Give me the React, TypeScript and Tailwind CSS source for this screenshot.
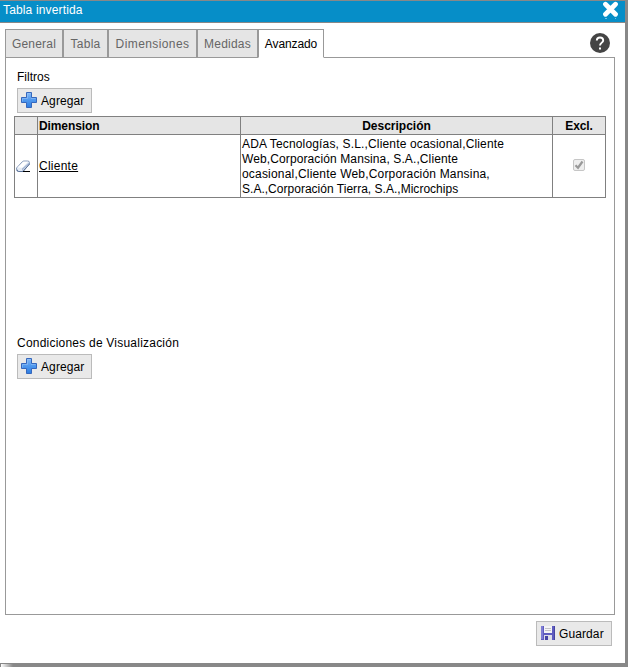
import type { ReactNode } from 'react'

const tabs = [
  { label: 'General', className: 'w-[58px]', spacing: 'tracking-[0.2px]' },
  { label: 'Tabla', className: 'w-[45px]', spacing: 'tracking-[0.3px]' },
  { label: 'Dimensiones', className: 'w-[89px]', spacing: 'tracking-[0.4px]' },
  { label: 'Medidas', className: 'w-[61px]', spacing: 'tracking-[0.2px]' },
  { label: 'Avanzado', className: 'w-[66px]', spacing: 'tracking-[-0.1px]', active: true },
]

const descripcion = [
  { text: 'ADA Tecnologías, S.L.,Cliente ocasional,Cliente', spacing: 'tracking-[0.16px]' },
  { text: 'Web,Corporación Mansina, S.A.,Cliente', spacing: 'tracking-[0.11px]' },
  { text: 'ocasional,Cliente Web,Corporación Mansina,', spacing: 'tracking-[0.19px]' },
  { text: 'S.A.,Corporación Tierra, S.A.,Microchips', spacing: 'tracking-[0.02px]' },
]

function PlusIcon() {
  return (
    <svg className="mb-px" width="16" height="16" viewBox="0 0 16 16">
      <defs>
        <linearGradient id="plus" x1="0" y1="0" x2="0" y2="1">
          <stop offset="0" stopColor="#86b9f4" />
          <stop offset="0.5" stopColor="#4f98ee" />
          <stop offset="1" stopColor="#2e7de0" />
        </linearGradient>
      </defs>
      <path d="M5.5 .5h5v5h5v5h-5v5h-5v-5h-5v-5h5z" fill="url(#plus)" stroke="#3567bd" strokeLinejoin="round" />
      <path d="M6.5 6.5v-5h3M1.5 9.5v-3h5M10 6.5h4.5" fill="none" stroke="#9cc8f8" strokeOpacity="0.5" />
    </svg>
  )
}

function SaveIcon() {
  return (
    <svg className="mb-px" width="14" height="14" viewBox="0 0 14 14">
      <path d="M0 0h14v13l-1 1H0z" fill="#5f5cc0" />
      <path d="M0 0h2v13H0z" fill="#7f7dd4" />
      <path d="M13 0h1v14h-1z" fill="#4644a0" />
      <path d="M3 0h8v7H3z" fill="#f4f4f6" />
      <path d="M4 2h6v1H4zM4 4h6v1H4z" fill="#c3c3c8" />
      <path d="M3 9h8v5H3z" fill="#dedee8" />
      <path d="M4 10h3v4H4z" fill="#4543a5" />
    </svg>
  )
}

function EraserIcon() {
  return (
    <svg width="14" height="13" viewBox="0 0 14 13">
      <path d="M.5 8 6.500 1.500Q7 1 8 1h3.500q2 0 2 1.500V4L7 11.500H2.500Q.5 11.500.5 9.500z" fill="#e4ebf5" stroke="#8a9dbb" />
      <path d="M1.500 7.500 7.500 1.800H12L6.500 7.800z" fill="#fff" />
      <path d="M6 8.500v2.500L13 4V2.500z" fill="#a9bad5" />
      <path d="M1 9.500q.3 2 1.800 2H7L13.500 4" fill="none" stroke="#5c7399" />
      <path d="M7 11h7v1H7z" fill="#000" />
    </svg>
  )
}

function Button({ icon, className, children }: { icon: ReactNode; className: string; children: ReactNode }) {
  return (
    <button type="button" className={`flex h-[25px] items-center border border-[#bbb] bg-[#e9e9e9] ${className}`}>
      {icon}
      <span className="pt-px tracking-[0.1px]">{children}</span>
    </button>
  )
}

export default function App() {
  return (
    <div className="flex h-[667px] w-[628px] flex-col overflow-hidden border-t border-r-[3px] border-b-4 border-[#888] bg-white font-['Liberation_Sans',Arial,sans-serif] text-[12px] leading-[15px] text-black">
      <header className="relative flex h-[22px] shrink-0 justify-between border-b border-[#888] bg-[#068ec8] pl-[3px] text-white">
        <h1 className="pt-[2px] tracking-[0.15px]">Tabla invertida</h1>
        <svg className="mr-[6px]" width="17" height="18" viewBox="0 0 17 18">
          <path d="m3.500 3.300 10 9.900m0-9.900-10 9.900" stroke="#fff" strokeWidth="4.800" strokeLinecap="round" />
          <path d="M3 17.500h2M13 17.500h1" stroke="#6fc0e2" />
        </svg>
      </header>

      <div className="ml-[5px] flex h-[34px] w-[610px] shrink-0 items-start justify-between pt-[6px]">
        <nav className="relative z-10 flex">
          {tabs.map((tab) => (
            <a
              key={tab.label}
              className={`flex h-[29px] items-center justify-center whitespace-nowrap border border-[#999] pt-[2px] ${tab.className} ${tab.spacing} ${
                tab.active ? 'border-b-white bg-white' : 'bg-[#e5e5e5] text-[#666]'
              }`}
            >
              {tab.label}
            </a>
          ))}
        </nav>
        <svg className="mt-[4px] mr-[5px]" width="20" height="20" viewBox="0 0 20 20">
          <circle cx="10" cy="10" r="10" fill="#444" />
          <path d="M6.800 7.600Q6.800 4.500 10 4.500t3.200 2.900c0 2.100-3.200 2.500-3.200 5.100" fill="none" stroke="#fff" strokeWidth="1.900" />
          <path d="M9 14.500h2v2H9z" fill="#fff" />
        </svg>
      </div>

      <main className="ml-[5px] flex h-[558px] w-[610px] shrink-0 flex-col border border-[#999]">
        <section className="h-[266px] pt-[12px]">
          <h2 className="ml-[11px]">Filtros</h2>
          <Button icon={<PlusIcon />} className="mt-[3px] ml-[11px] w-[75px] gap-1 pl-[3px]">Agregar</Button>
          <table className="mt-[3px] ml-[8px] w-[592px] table-fixed border-collapse border border-[#808080]">
            <colgroup>
              <col className="w-[23px]" />
              <col className="w-[203px]" />
              <col className="w-[312px]" />
              <col className="w-[53px]" />
            </colgroup>
            <thead>
              <tr className="h-[18px] bg-[#e5e5e5] tracking-[-0.1px]">
                <th className="border border-[#808080] p-0" />
                <th className="border border-[#808080] p-0 pt-px pl-[1px] text-left">Dimension</th>
                <th className="border border-[#808080] p-0 pt-px tracking-normal">Descripción</th>
                <th className="border border-[#808080] p-0 pt-px">Excl.</th>
              </tr>
            </thead>
            <tbody>
              <tr className="h-[63px]">
                <td className="border border-[#808080] p-0 pl-[1px]">
                  <EraserIcon />
                </td>
                <td className="border border-[#808080] p-0 pl-[1px]">
                  <a className="tracking-[0.25px] underline">Cliente</a>
                </td>
                <td className="border border-[#808080] p-0 pt-[2px] pl-[1px] whitespace-nowrap">
                  {descripcion.map((line) => (
                    <div key={line.text} className={line.spacing}>{line.text}</div>
                  ))}
                </td>
                <td className="border border-[#808080] p-0">
                  <div className="mx-auto -mt-[2px] flex h-3 w-3 items-center justify-center rounded-[2px] border border-[#c6c6c6] bg-[#eee]">
                    <svg width="10" height="10" viewBox="0 0 10 10">
                      <path d="M1.500 5.200 4 7.700l4.500-6.200" fill="none" stroke="#999" strokeWidth="2.200" />
                    </svg>
                  </div>
                </td>
              </tr>
            </tbody>
          </table>
        </section>

        <section className="pt-[12px]">
          <h2 className="ml-[11px] tracking-[0.22px]">Condiciones de Visualización</h2>
          <Button icon={<PlusIcon />} className="mt-[3px] ml-[11px] w-[75px] gap-1 pl-[3px]">Agregar</Button>
        </section>
      </main>

      <footer className="mt-[6px] mr-[13px] flex justify-end">
        <Button icon={<SaveIcon />} className="w-[76px] gap-1 pl-1">Guardar</Button>
      </footer>
      <div className="fixed bottom-0 left-[1px] h-[3px] w-3 bg-gradient-to-r from-white to-[#888]" />
    </div>
  )
}
